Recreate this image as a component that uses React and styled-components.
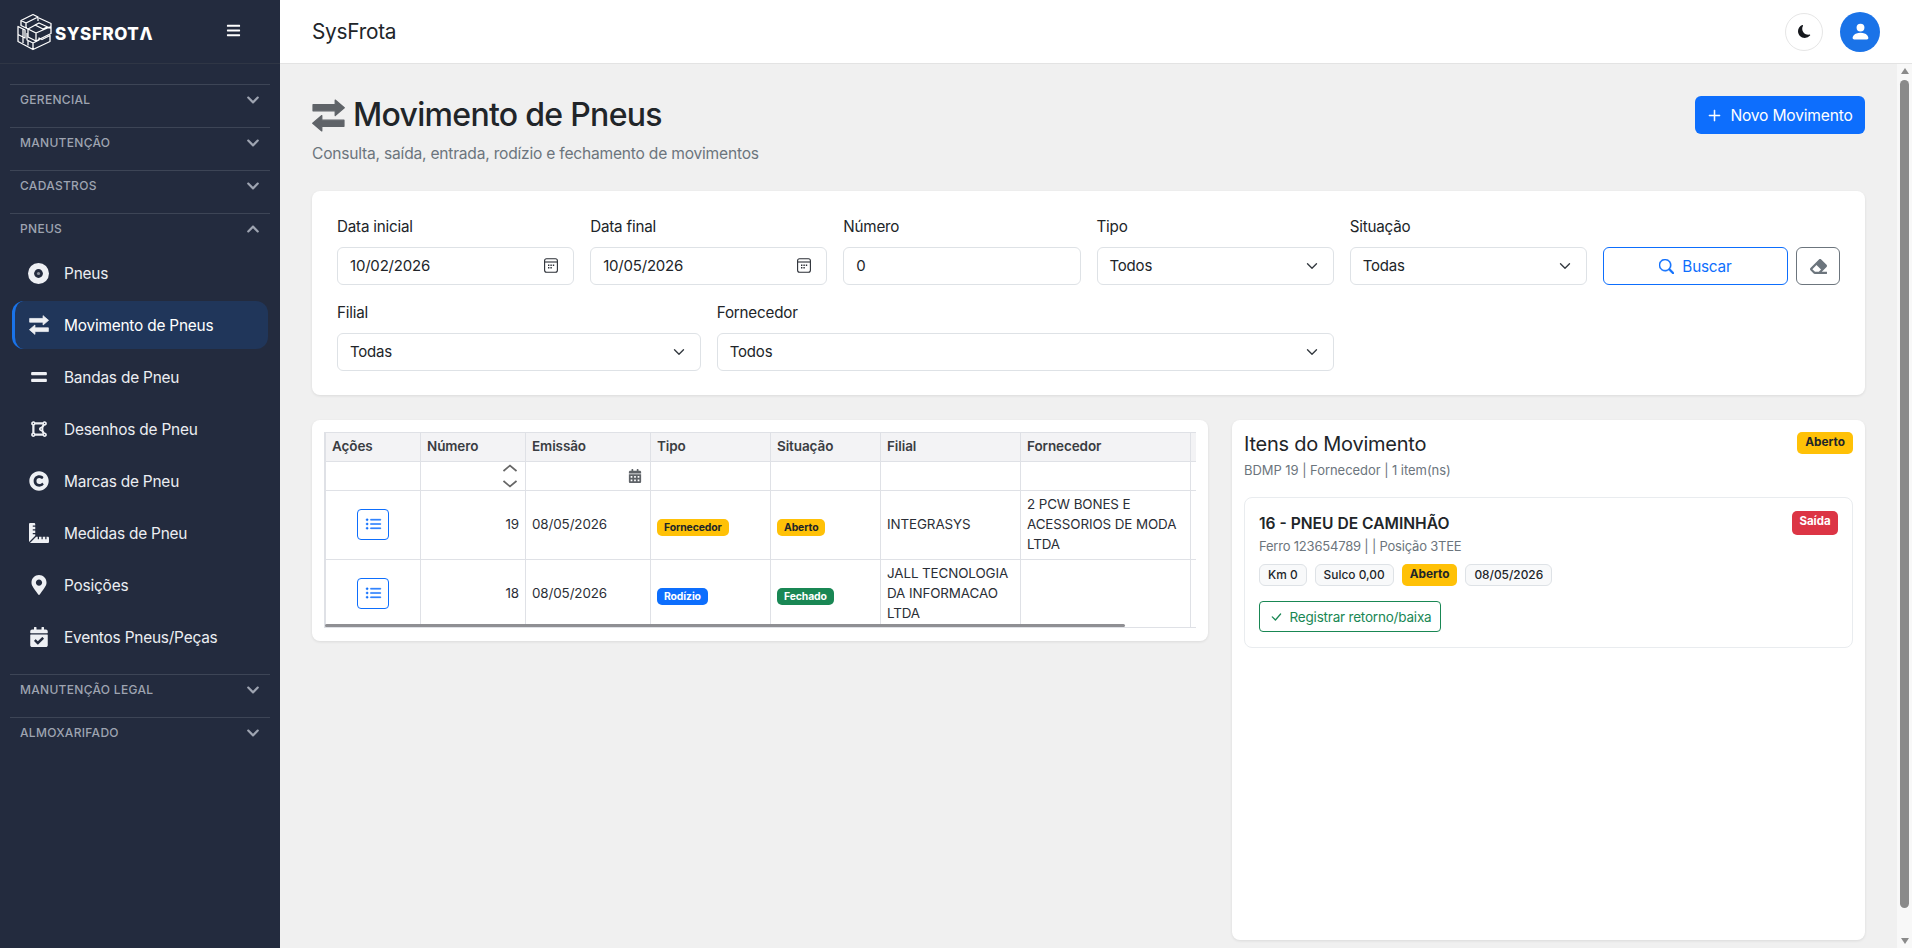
import React from 'react';
import styled, { createGlobalStyle } from 'styled-components';
import {
  FaBars, FaChevronDown, FaChevronUp, FaEquals, FaDrawPolygon, FaCopyright, FaEraser,
  FaRulerCombined, FaMapMarkerAlt, FaCalendarCheck, FaCalendarAlt,
} from 'react-icons/fa';
import { BsPlusLg, BsSearch, BsListUl, BsCheckLg, BsMoonFill, BsPersonFill } from 'react-icons/bs';

const GlobalStyle = createGlobalStyle`
  html, body { margin: 0; padding: 0; height: 100%; overflow: hidden; }
  body { font-family: Inter, "Noto Sans", sans-serif; color: #212529; background: #f0f0f0; }
  * { box-sizing: border-box; }
`;

const Shell = styled.div`
  display: flex;
  height: 100vh;
`;

const Sidebar = styled.aside`
  width: 280px;
  flex: none;
  background: #232b3e;
  color: #fff;
`;

const Brand = styled.div`
  height: 64px;
  display: flex;
  align-items: center;
  padding: 0 39px 0 16px;
  border-bottom: 1px solid #2f3645;
`;

const BrandName = styled.span`
  margin-left: 3px;
  font-size: 17px;
  font-weight: 800;
  letter-spacing: 0.55px;
  margin-top: 4px;
`;

const Burger = styled.span`
  margin-left: auto;
  display: flex;
  margin-top: -3px;
`;

const Nav = styled.nav`
  padding: 20px 10px 0;
`;

const Section = styled.div`
  height: 43px;
  border-top: 1px solid #3d4556;
  display: flex;
  justify-content: space-between;
  padding: 7px 10px 0 10px;
  font-size: 12px;
  line-height: 15px;
  font-weight: 500;
  letter-spacing: 0.3px;
  color: #9ea4b1;
  svg { margin-top: 1px; }
`;

const Items = styled.div`
  display: flex;
  flex-direction: column;
  gap: 4px;
  margin: -7px 2px 13px;
`;

const Item = styled.div`
  height: 48px;
  display: flex;
  align-items: center;
  gap: 15px;
  padding-left: ${(p) => (p.$active ? '13px' : '16px')};
  border-radius: 12px;
  font-size: 15.4px;
  letter-spacing: -0.2px;
  color: ${(p) => (p.$active ? '#fff' : '#eceef2')};
  background: ${(p) => (p.$active ? '#20365a' : 'transparent')};
  border-left: ${(p) => (p.$active ? '3px solid #1a73e8' : '0')};
`;

const ItemIcon = styled.span`
  width: 21px;
  display: flex;
  justify-content: center;
  color: #eef0f4;
`;

const Content = styled.div`
  flex: 1;
  min-width: 0;
  display: flex;
  flex-direction: column;
`;

const TopBar = styled.header`
  height: 64px;
  flex: none;
  background: #fff;
  border-bottom: 1px solid #e3e3e3;
  display: flex;
  align-items: center;
  padding: 0 32px;
`;

const AppName = styled.div`
  font-size: 20.8px;
  letter-spacing: -0.25px;
  color: #212529;
`;

const RoundButton = styled.span`
  width: ${(p) => (p.$primary ? '40px' : '38px')};
  height: ${(p) => (p.$primary ? '40px' : '38px')};
  margin-left: ${(p) => (p.$primary ? '17px' : 'auto')};
  border-radius: 50%;
  display: flex;
  align-items: center;
  justify-content: center;
  background: ${(p) => (p.$primary ? '#1a73e8' : '#fff')};
  color: ${(p) => (p.$primary ? '#fff' : '#16181d')};
  border: ${(p) => (p.$primary ? '0' : '1px solid #e6e6e6')};
`;

const Body = styled.div`
  flex: 1;
  min-height: 0;
  display: flex;
`;

const Main = styled.main`
  flex: 1;
  min-width: 0;
  overflow: hidden;
  padding: 32px 32px 0 32px;
  background: #f0f0f0;
`;

const Rail = styled.div`
  width: 15px;
  flex: none;
  background: #f8f8f8;
  display: flex;
  flex-direction: column;
  align-items: center;
  padding: 4px 0;
`;

const RailArrow = styled.span`
  width: 0;
  height: 0;
  border-left: 4.5px solid transparent;
  border-right: 4.5px solid transparent;
  border-bottom: ${(p) => (p.$down ? '0' : '6px solid #8a8a8a')};
  border-top: ${(p) => (p.$down ? '6px solid #8a8a8a' : '0')};
  margin-top: ${(p) => (p.$down ? 'auto' : '0')};
`;

const RailThumb = styled.span`
  width: 9px;
  height: 828px;
  margin-top: 6px;
  border-radius: 5px;
  background: #8a8a8a;
`;

const PageHead = styled.div`
  display: flex;
  justify-content: space-between;
  align-items: flex-start;
  margin-bottom: 26px;
`;

const Title = styled.h1`
  margin: 0 0 8px;
  display: flex;
  align-items: center;
  gap: 8px;
  font-size: 32px;
  line-height: 38px;
  font-weight: 500;
  letter-spacing: -0.7px;
  color: #212529;
  svg { color: #5f6368; margin-top: 1px; }
`;

const Subtitle = styled.div`
  font-size: 15.6px;
  line-height: 23px;
  letter-spacing: -0.22px;
  color: #6c757d;
`;

const PrimaryButton = styled.button`
  height: 38px;
  width: 170px;
  border: 0;
  border-radius: 6px;
  background: #0d6efd;
  color: #fff;
  font: 15.6px Inter, sans-serif;
  letter-spacing: -0.2px;
  display: flex;
  align-items: center;
  justify-content: center;
  gap: 8px;
`;

const Card = styled.section`
  background: #fff;
  border-radius: 8px;
  box-shadow: 0 1px 3px rgba(0, 0, 0, 0.09);
`;

const FilterCard = styled(Card)`
  padding: 24px 25px;
  display: grid;
  grid-template-columns: repeat(12, minmax(0, 1fr));
  gap: 16px;
  margin-bottom: 25px;
`;

const Field = styled.div`
  grid-column: span ${(p) => p.$span};
`;

const Label = styled.div`
  font-size: 15.2px;
  line-height: 24px;
  letter-spacing: -0.2px;
  margin-bottom: 8px;
  color: #212529;
`;

const ControlBox = styled.div`
  height: 38px;
  border: 1px solid #dee2e6;
  border-radius: 6px;
  background: #fff;
  padding: 0 15px 1px 12px;
  display: flex;
  align-items: center;
  justify-content: space-between;
  font-size: 15px;
  letter-spacing: -0.2px;
  color: #212529;
`;

const ActionCell = styled.div`
  grid-column: span 2;
  align-self: end;
  display: flex;
  gap: 8px;
`;

const SearchButton = styled.button`
  flex: 1;
  height: 38px;
  border: 1px solid #0d6efd;
  border-radius: 6px;
  background: #fff;
  color: #0d6efd;
  font: 15.3px Inter, sans-serif;
  letter-spacing: -0.2px;
  display: flex;
  align-items: center;
  justify-content: center;
  gap: 8px;
`;

const ClearButton = styled.button`
  width: 44px;
  height: 38px;
  border: 1px solid #6c757d;
  border-radius: 6px;
  background: #fff;
  color: #6c757d;
  display: flex;
  align-items: center;
  justify-content: center;
  padding: 0;
`;

const Lower = styled.div`
  display: grid;
  grid-template-columns: minmax(0, 1fr) 633px;
  gap: 24px;
  align-items: start;
`;

const TableCard = styled(Card)`
  padding: 12px 12px 13px 12px;
`;

const TableWrap = styled.div`
  position: relative;
  height: 196px;
  width: 872px;
  overflow: hidden;
  border: 1px solid #dfe1e6;
  border-right: 0;
`;

const ScrollThumb = styled.div`
  position: absolute;
  left: 0;
  bottom: 0;
  height: 3px;
  background: #8f8f93;
  border-radius: 2px;
`;

const Grid = styled.table`
  width: 948px;
  table-layout: fixed;
  border-collapse: collapse;
  font-size: 13.4px;
  line-height: 20px;
  letter-spacing: -0.1px;
  color: #2a2e36;
`;

const Head = styled.th`
  height: 28px;
  padding: 0 6px 1px;
  background: #f3f3f5;
  text-align: left;
  font-weight: 600;
  font-size: 13.5px;
  color: #3a3d42;
  border: 1px solid #dfe1e6;
  border-top: 0;
`;

const FilterTd = styled.td`
  height: 29px;
  padding: 0 6px;
  border: 1px solid #dfe1e6;
  text-align: right;
  vertical-align: middle;
`;

const Td = styled.td`
  height: 69px;
  padding: 0 6px 2px;
  border: 1px solid #dfe1e6;
  vertical-align: middle;
  text-align: ${(p) => p.$align || 'left'};
`;

const RowButton = styled.button`
  width: 32px;
  height: 31px;
  padding: 0;
  border: 1px solid #0d6efd;
  border-radius: 4px;
  background: #fff;
  color: #0d6efd;
  display: inline-flex;
  align-items: center;
  justify-content: center;
  vertical-align: -11px;
`;

const tones = {
  warning: ['#ffc107', '#212529'],
  primary: ['#0d6efd', '#fff'],
  success: ['#198754', '#fff'],
  danger: ['#dc3545', '#fff'],
};

const Badge = styled.span`
  display: inline-block;
  padding: ${(p) => (p.$size === 'lg' ? '3px 8px' : '2px 7px')};
  height: ${(p) => (p.$size === 'lg' ? '22px' : '17px')};
  border-radius: 5px;
  font-size: ${(p) => (p.$size === 'lg' ? '11.8px' : '10.4px')};
  line-height: ${(p) => (p.$size === 'lg' ? '15px' : '13px')};
  font-weight: 700;
  white-space: nowrap;
  vertical-align: ${(p) => (p.$size === 'lg' ? 'baseline' : '-5px')};
  background: ${(p) => tones[p.$tone][0]};
  color: ${(p) => tones[p.$tone][1]};
`;

const ItemsCard = styled(Card)`
  min-height: 520px;
  padding: 12px;
`;

const ItemsHead = styled.div`
  display: flex;
  justify-content: space-between;
  align-items: flex-start;
  margin-bottom: 18px;
`;

const ItemsTitle = styled.div`
  font-size: 20px;
  line-height: 24px;
  letter-spacing: -0.25px;
  color: #212529;
`;

const Summary = styled.div`
  font-size: 13px;
  line-height: 18px;
  letter-spacing: -0.05px;
  color: #6c757d;
  margin-top: 5px;
`;

const TireMeta = styled.div`
  font-size: 13px;
  line-height: 18px;
  letter-spacing: -0.2px;
  color: #6c757d;
  margin-top: 2px;
`;

const TireCard = styled.div`
  border: 1px solid #e9ecef;
  border-radius: 8px;
  padding: 14px;
  height: 151px;
`;

const TireTop = styled.div`
  display: flex;
  justify-content: space-between;
  align-items: flex-start;
`;

const TireName = styled.div`
  font-size: 15.6px;
  line-height: 20px;
  font-weight: 600;
  margin-top: 2px;
  color: #212529;
`;

const ExitBadge = styled.span`
  height: 24px;
  width: 46px;
  margin-top: -1px;
  border-radius: 5px;
  background: #dc3545;
  color: #fff;
  font-size: 11.5px;
  line-height: 20px;
  font-weight: 700;
  text-align: center;
`;

const Chips = styled.div`
  display: flex;
  gap: 8px;
  margin-top: 9px;
`;

const Chip = styled.span`
  height: 22px;
  padding: 0 8px;
  border: 1px solid #dee2e6;
  border-radius: 6px;
  background: #f8f9fa;
  font-size: 11.9px;
  line-height: 20px;
  font-weight: 500;
  color: #212529;
`;

const ReturnButton = styled.button`
  margin-top: 15px;
  width: 182px;
  height: 31px;
  border: 1px solid #198754;
  border-radius: 4px;
  background: #fff;
  color: #198754;
  font: 13.5px Inter, sans-serif;
  letter-spacing: -0.2px;
  display: flex;
  align-items: center;
  justify-content: center;
  gap: 7px;
  padding: 0;
`;

const Logo = () => (
  <svg width="36" height="38" viewBox="0 0 36 38" fill="none" stroke="#fff" strokeWidth="1.3" strokeLinejoin="round">
    <path d="M17 1.5L5 7.5v5l7 3.5M17 1.5l5 2.5-12 6-5-2.5M10 10v5M22 4v4" />
    <path d="M23 5l12 5.5v10L20 28l-8-4v-8l11-6 12 5.5M12 16l8 4v8M20 20l15-6.5M23 10l-4 2 8 4 4-2" />
    <path d="M2 13.5l7 3.5v8l-7-3.5zM2 21.5v7l15 8 17-8v-6l-8 4-3-1.5v2l-6 3-6-3v-7M7 16v14M12 27.5v5M17 30v6.5" />
  </svg>
);

const SwapIcon = ({ size }) => (
  <svg width={size} height={size} viewBox="0 0 32 32" fill="currentColor" stroke="currentColor" strokeWidth="1.2" strokeLinejoin="round">
    <path d="M1 5.5h21.5V1l8.8 7.5-8.8 7.5v-4.5H1z" />
    <path d="M31 20.5H9.5V16L.7 23.5 9.5 31v-4.5H31z" />
  </svg>
);

const TireIcon = () => (
  <svg width="21" height="21" viewBox="0 0 21 21">
    <circle cx="10.5" cy="10.5" r="10.5" fill="#eef0f4" />
    <circle cx="10.5" cy="10.5" r="4.4" fill="#232b3e" />
    <circle cx="10.5" cy="10.5" r="1.6" fill="#8c919c" />
  </svg>
);

const Chevron = ({ up }) => (
  up ? <FaChevronUp size={14} color="#9ea4b1" /> : <FaChevronDown size={14} color="#9ea4b1" />
);

const DateIcon = () => (
  <svg width="14" height="15" viewBox="0 0 14 15" fill="none" stroke="#2b2f36" strokeWidth="1.1">
    <rect x="0.6" y="0.8" width="12.8" height="13.4" rx="2" />
    <path d="M1 4h12" />
    <path d="M4 7.2h1.4M6.4 7.2h1.4M8.8 7.2h1.4M4 9.8h1.4M6.4 9.8h1.4" strokeWidth="1.4" />
  </svg>
);

const SelectCaret = () => (
  <svg width="12" height="12" viewBox="0 0 16 16" fill="none" stroke="#343a40" strokeWidth="1.8" strokeLinecap="round" strokeLinejoin="round">
    <path d="M2 5l6 6 6-6" />
  </svg>
);

const Spinner = () => (
  <svg width="14" height="24" viewBox="0 0 14 24" fill="none" stroke="#666" strokeWidth="1.7" style={{ display: 'block', marginLeft: 'auto', marginRight: 2 }}>
    <path d="M0.5 7L7 1.5 13.5 7M0.5 17L7 22.5 13.5 17" />
  </svg>
);

const sections = ['GERENCIAL', 'MANUTENÇÃO', 'CADASTROS'];

const tireItems = [
  { label: 'Pneus', icon: <TireIcon /> },
  { label: 'Movimento de Pneus', icon: <SwapIcon size={20} />, active: true },
  { label: 'Bandas de Pneu', icon: <FaEquals size={18} /> },
  { label: 'Desenhos de Pneu', icon: <FaDrawPolygon size={18} /> },
  { label: 'Marcas de Pneu', icon: <FaCopyright size={20} /> },
  { label: 'Medidas de Pneu', icon: <FaRulerCombined size={20} /> },
  { label: 'Posições', icon: <FaMapMarkerAlt size={20} /> },
  { label: 'Eventos Pneus/Peças', icon: <FaCalendarCheck size={20} /> },
];

const columns = [
  ['Ações', 95], ['Número', 105], ['Emissão', 125], ['Tipo', 120],
  ['Situação', 110], ['Filial', 140], ['Fornecedor', 170], ['', 83],
];

const rows = [
  {
    num: 19, date: '08/05/2026', type: ['Fornecedor', 'warning'], status: ['Aberto', 'warning'],
    branch: 'INTEGRASYS', supplier: '2 PCW BONES E ACESSORIOS DE MODA LTDA',
  },
  {
    num: 18, date: '08/05/2026', type: ['Rodízio', 'primary'], status: ['Fechado', 'success'],
    branch: 'JALL TECNOLOGIA DA INFORMACAO LTDA', supplier: '',
  },
];

export default function App() {
  return (
    <Shell>
      <GlobalStyle />
      <Sidebar>
        <Brand>
          <Logo />
          <BrandName>SYSFROTΛ</BrandName>
          <Burger><FaBars size={15} /></Burger>
        </Brand>
        <Nav>
          {sections.map((s) => (
            <Section key={s}>{s}<Chevron /></Section>
          ))}
          <Section>PNEUS<Chevron up /></Section>
          <Items>
            {tireItems.map((it) => (
              <Item key={it.label} $active={it.active}>
                <ItemIcon>{it.icon}</ItemIcon>
                {it.label}
              </Item>
            ))}
          </Items>
          <Section>MANUTENÇÃO LEGAL<Chevron /></Section>
          <Section>ALMOXARIFADO<Chevron /></Section>
        </Nav>
      </Sidebar>

      <Content>
        <TopBar>
          <AppName>SysFrota</AppName>
          <RoundButton><BsMoonFill size={13} /></RoundButton>
          <RoundButton $primary><BsPersonFill size={21} /></RoundButton>
        </TopBar>

        <Body>
          <Main>
            <PageHead>
              <div>
                <Title><SwapIcon size={33} />Movimento de Pneus</Title>
                <Subtitle>Consulta, saída, entrada, rodízio e fechamento de movimentos</Subtitle>
              </div>
              <PrimaryButton><BsPlusLg size={15} stroke="currentColor" strokeWidth="0.6" />Novo Movimento</PrimaryButton>
            </PageHead>

            <FilterCard>
              <Field $span={2}><Label>Data inicial</Label><ControlBox>10/02/2026<DateIcon /></ControlBox></Field>
              <Field $span={2}><Label>Data final</Label><ControlBox>10/05/2026<DateIcon /></ControlBox></Field>
              <Field $span={2}><Label>Número</Label><ControlBox>0</ControlBox></Field>
              <Field $span={2}><Label>Tipo</Label><ControlBox>Todos<SelectCaret /></ControlBox></Field>
              <Field $span={2}><Label>Situação</Label><ControlBox>Todas<SelectCaret /></ControlBox></Field>
              <ActionCell>
                <SearchButton><BsSearch size={15} stroke="currentColor" strokeWidth="0.6" />Buscar</SearchButton>
                <ClearButton><FaEraser size={17} /></ClearButton>
              </ActionCell>
              <Field $span={3}><Label>Filial</Label><ControlBox>Todas<SelectCaret /></ControlBox></Field>
              <Field $span={5}><Label>Fornecedor</Label><ControlBox>Todos<SelectCaret /></ControlBox></Field>
            </FilterCard>

            <Lower>
              <TableCard>
                <TableWrap>
                  <Grid>
                    <colgroup>
                      {columns.map(([name, width]) => <col key={name || 'extra'} width={width} />)}
                    </colgroup>
                    <thead>
                      <tr>{columns.map(([name]) => <Head key={name || 'extra'}>{name}</Head>)}</tr>
                    </thead>
                    <tbody>
                      <tr>
                        <FilterTd />
                        <FilterTd><Spinner /></FilterTd>
                        <FilterTd><FaCalendarAlt size={14} color="#5f6368" style={{ display: 'block', marginLeft: 'auto', marginRight: 2 }} /></FilterTd>
                        <FilterTd /><FilterTd /><FilterTd /><FilterTd /><FilterTd />
                      </tr>
                      {rows.map((r) => (
                        <tr key={r.num}>
                          <Td $align="center"><RowButton><BsListUl size={17} stroke="currentColor" strokeWidth="0.4" /></RowButton></Td>
                          <Td $align="right">{r.num}</Td>
                          <Td>{r.date}</Td>
                          <Td><Badge $tone={r.type[1]}>{r.type[0]}</Badge></Td>
                          <Td><Badge $tone={r.status[1]}>{r.status[0]}</Badge></Td>
                          <Td>{r.branch}</Td>
                          <Td>{r.supplier}</Td>
                          <Td />
                        </tr>
                      ))}
                    </tbody>
                  </Grid>
                  <ScrollThumb style={{ width: `${Math.round((871 / 948) * 871)}px` }} />
                </TableWrap>
              </TableCard>

              <ItemsCard>
                <ItemsHead>
                  <div>
                    <ItemsTitle>Itens do Movimento</ItemsTitle>
                    <Summary>BDMP 19 | Fornecedor | 1 item(ns)</Summary>
                  </div>
                  <Badge $tone="warning" $size="lg">Aberto</Badge>
                </ItemsHead>
                <TireCard>
                  <TireTop>
                    <TireName>16 - PNEU DE CAMINHÃO</TireName>
                    <ExitBadge>Saída</ExitBadge>
                  </TireTop>
                  <TireMeta>Ferro 123654789 | | Posição 3TEE</TireMeta>
                  <Chips>
                    <Chip>Km 0</Chip>
                    <Chip>Sulco 0,00</Chip>
                    <Badge $tone="warning" $size="lg">Aberto</Badge>
                    <Chip>08/05/2026</Chip>
                  </Chips>
                  <ReturnButton><BsCheckLg size={14} />Registrar retorno/baixa</ReturnButton>
                </TireCard>
              </ItemsCard>
            </Lower>
          </Main>
          <Rail>
            <RailArrow />
            <RailThumb />
            <RailArrow $down />
          </Rail>
        </Body>
      </Content>
    </Shell>
  );
}
